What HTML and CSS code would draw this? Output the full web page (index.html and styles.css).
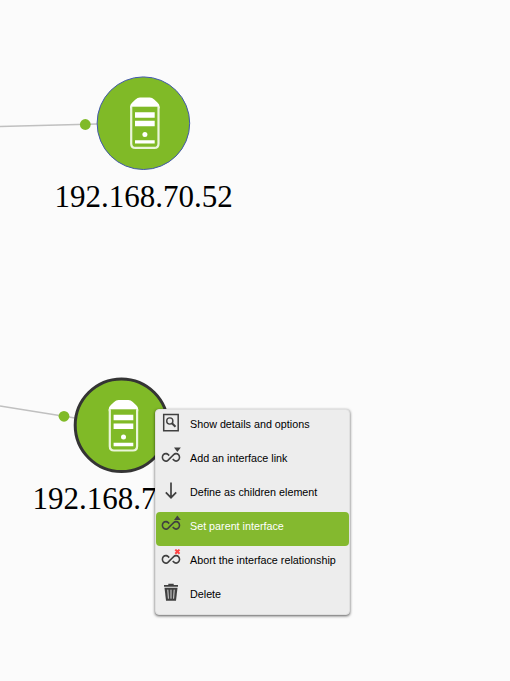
FILE: index.html
```html
<!DOCTYPE html>
<html lang="en">
<head>
<meta charset="utf-8">
<title>Network map</title>
<link rel="stylesheet" href="styles.css">
</head>
<body>
<svg class="map" width="510" height="681" viewBox="0 0 510 681">
  <defs>
    <g id="server">
      <path d="M-12.700-17v37q0 4.200 4.200 4.200h18.900q4.200 0 4.200-4.200v-37" fill="none" stroke="#eaf5da" stroke-width="2.200"/>
      <path d="M-13.800-14.500v-2.500q0-2.500 2.200-4.300l3.200-3q2-1.900 4.400-1.900h9.900q2.400 0 4.400 1.900l3.200 3q2.200 1.800 2.200 4.300v2.500q-.4-3.300-3.400-3.300h-22.700q-3 0-3.400 3.300z" fill="#fff"/>
      <path d="M-13-18.500h27.800v1.500H-13z" fill="#fff"/>
      <path d="M-8.900-11.500H10.800v5.500H-8.900zM-8.900-2.900H10.800v5.500H-8.900zM-8.900 16.500H10.800v3.400H-8.900z" fill="#fff"/>
      <circle cx="1" cy="10.800" r="2.500" fill="#fff"/>
    </g>
  </defs>
  <path class="link" d="M0 126.500L97 124M0 406L75 418"/>
  <circle class="port" cx="85.300" cy="124.500" r="5.400"/>
  <circle class="port" cx="64" cy="416.300" r="5.400"/>
  <circle class="node" cx="143.400" cy="123.200" r="46.300"/>
  <use href="#server" x="143.900" y="123.700"/>
  <text class="label" x="54.500" y="207">192.168.70.52</text>
  <circle class="node selected" cx="121.500" cy="425.300" r="46.300"/>
  <use href="#server" x="122.500" y="426.300"/>
  <text class="label" x="32.500" y="509">192.168.7</text>
</svg>

<svg class="symbols" width="0" height="0">
  <symbol id="loop" viewBox="0 0 20 20">
    <path transform="translate(.6 0) scale(.78 .86)" fill="#404040" d="M18.600 6.620c-1.440 0-2.800.56-3.770 1.530L12 10.660 10.480 12h.01L7.800 14.390c-.64.64-1.490.99-2.400.99-1.870 0-3.390-1.510-3.390-3.380S3.530 8.620 5.400 8.620c.91 0 1.760.35 2.440 1.030l1.130 1 1.510-1.340L9.220 8.200C8.200 7.180 6.840 6.620 5.400 6.620 2.420 6.620 0 9.040 0 12s2.420 5.380 5.400 5.380c1.440 0 2.800-.56 3.770-1.530l2.830-2.500.01.01L13.520 12h-.01l2.690-2.390c.64-.64 1.490-.99 2.400-.99 1.870 0 3.390 1.510 3.390 3.380s-1.520 3.380-3.390 3.380c-.9 0-1.760-.35-2.440-1.030l-1.140-1.010-1.510 1.340 1.270 1.120c1.020 1.010 2.370 1.570 3.820 1.570 2.980 0 5.400-2.410 5.400-5.380s-2.420-5.370-5.400-5.370z"/>
  </symbol>
</svg>

<ul class="menu">
  <li class="item">
    <svg class="icon" viewBox="0 0 20 20"><path d="M2.700 1.500h14.500v16.300H2.700z" fill="none" stroke="#404040" stroke-width="1.500"/><circle cx="8.800" cy="8" r="3.100" fill="none" stroke="#404040" stroke-width="1.400"/><path d="M11 10.200l3.500 3.600" stroke="#404040" stroke-width="2"/></svg>
    <span>Show details and options</span>
  </li>
  <li class="item">
    <svg class="icon" viewBox="0 0 20 20"><use href="#loop"/><path d="M13 .5h6.800L16.400 5z" fill="#404040"/></svg>
    <span>Add an interface link</span>
  </li>
  <li class="item">
    <svg class="icon" viewBox="0 0 20 20"><path d="M10 1.500v15M4.800 11.300l5.200 5.400 5.200-5.400" fill="none" stroke="#404040" stroke-width="1.700"/></svg>
    <span>Define as children element</span>
  </li>
  <li class="item active">
    <svg class="icon" viewBox="0 0 20 20"><use href="#loop"/><path d="M13 5h6.800L16.400.400z" fill="#404040"/></svg>
    <span>Set parent interface</span>
  </li>
  <li class="item">
    <svg class="icon" viewBox="0 0 20 20"><use href="#loop"/><path d="M14.300.600l4.200 4.200M18.500.600l-4.200 4.200" stroke="#f44" stroke-width="2"/></svg>
    <span>Abort the interface relationship</span>
  </li>
  <li class="item">
    <svg class="icon" viewBox="0 0 20 20"><path d="M3 3.800V2h4.300V.700h5.400V2H17v1.800z" fill="#404040"/><path d="M3.500 4.800h13L15 17.800H5z" fill="#404040"/><path d="M6.800 6.700l.6 9M10 6.700v9M13.200 6.700l-.6 9" stroke="#d8d8d8" stroke-width="1"/></svg>
    <span>Delete</span>
  </li>
</ul>
</body>
</html>
```
FILE: styles.css
```css
body {
  position: relative;
  width: 510px;
  height: 681px;
  margin: 0;
  overflow: hidden;
  background: #fbfbfb;
}

.map {
  display: block;
}

.symbols {
  position: absolute;
}

.link {
  fill: none;
  stroke: #c0c0c0;
  stroke-width: 1.7;
}

.port {
  fill: #80ba27;
}

.node {
  fill: #80ba27;
  stroke: #4258ad;
  stroke-width: 1;
}

.node.selected {
  stroke: #343434;
  stroke-width: 3;
}

.label {
  fill: #000;
  font: 31px "Liberation Serif", serif;
}

.menu {
  position: absolute;
  left: 155px;
  top: 409px;
  box-sizing: border-box;
  width: 195px;
  margin: 0;
  padding: 0;
  list-style: none;
  border: 1px solid #e0e0e0;
  border-radius: 4px;
  background: #ededed;
  box-shadow: 0 1px 3px rgba(0, 0, 0, 0.65);
}

.item {
  display: flex;
  align-items: flex-start;
  gap: 9px;
  box-sizing: border-box;
  height: 34px;
  padding: 3px 5px;
  border-radius: 4px;
  color: #000;
  font: 10.75px/22px "Liberation Sans", sans-serif;
  white-space: nowrap;
}

.item.active {
  background: #84b92f;
  color: #fff;
}

.icon {
  flex: none;
  width: 20px;
  height: 20px;
}
```
